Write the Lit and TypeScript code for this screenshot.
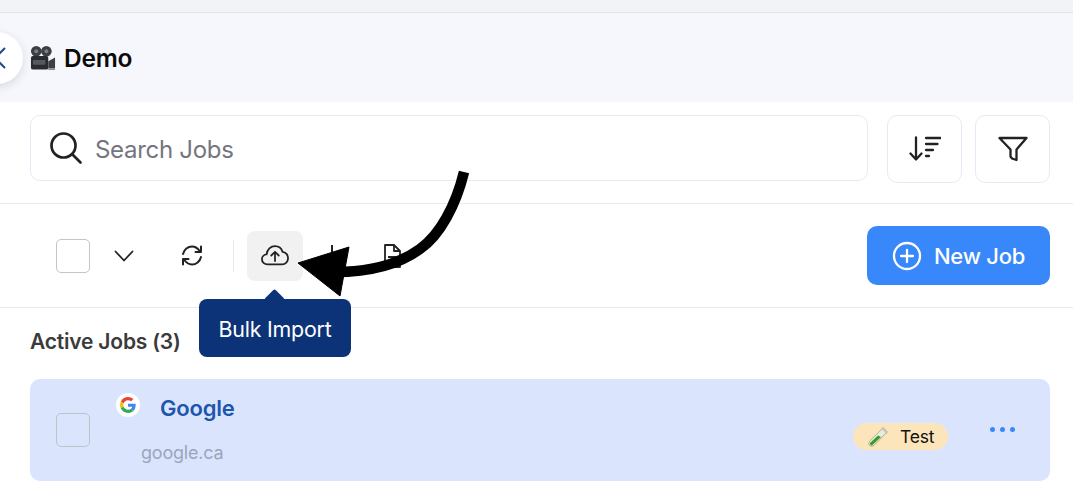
import { LitElement, html, css } from "lit";
import { customElement } from "lit/decorators.js";

@customElement("app-root")
export class AppRoot extends LitElement {
  static styles = css`
    :host { display: block; width: 1073px; height: 492px; overflow: hidden; position: relative; background: #fff; font-family: Inter, "Noto Sans", sans-serif; color: #222; }
    * { box-sizing: border-box; }
    svg { display: block; }
    .topband { height: 13px; background: #f2f3f7; border-bottom: 1px solid #e3e4ea; }
    .header { height: 89px; background: #f6f7fc; display: flex; align-items: center; padding-left: 30px; gap: 8px; position: relative; }
    .back { position: absolute; left: -29px; top: 19px; width: 52px; height: 52px; border-radius: 50%; background: #fff; box-shadow: 0 3px 10px rgba(30,40,80,.14); display: flex; align-items: center; justify-content: flex-end; padding-right: 17px; }
    .title { font-size: 24.5px; font-weight: 600; color: #0a0a0a; letter-spacing: -.25px; }
    .search-row { height: 102px; border-bottom: 1px solid #e9e9f3; padding: 13px 23px 0 30px; display: flex; gap: 13px; align-items: flex-start; }
    .search { flex: 1; height: 66px; border: 1px solid #e8e9f3; border-radius: 10px; display: flex; align-items: center; padding-left: 18px; gap: 12px; font-size: 24px; letter-spacing: -.3px; color: #75757f; margin-right: 6px; }
    .search span { padding-top: 2px; }
    .sq { width: 75px; height: 68px; border: 1px solid #e8e9f3; border-radius: 10px; display: flex; align-items: center; justify-content: center; }
    .toolbar { height: 104px; border-bottom: 1px solid #e9e9f3; display: flex; align-items: center; padding: 0 23px 0 56px; position: relative; }
    .check { width: 34px; height: 34px; border: 1px solid #c5c5c5; border-radius: 5px; flex: none; }
    .chev { margin-left: 24px; }
    .refresh { margin-left: 47px; }
    .sep { width: 1px; height: 32px; background: #e8e8ee; margin-left: 30px; }
    .upload { width: 56px; height: 50px; background: #f1f1f1; border-radius: 8px; margin-left: 13px; display: flex; align-items: center; justify-content: center; }
    .plus { margin-left: 20px; }
    .doc { margin-left: 42px; }
    .new { margin-left: auto; width: 183px; height: 59px; background: #3888fb; border-radius: 10px; color: #fff; display: flex; align-items: center; justify-content: center; gap: 12px; font-size: 22px; font-weight: 500; letter-spacing: -.25px; }
    .tip { position: absolute; left: 199px; top: 95px; width: 152px; height: 58px; background: #0c3278; color: #fff; border-radius: 8px; font-size: 21.4px; display: flex; align-items: center; justify-content: center; letter-spacing: -.2px; padding-top: 1px; }
    .tip::before { content: ""; position: absolute; left: 68px; top: -7px; width: 15px; height: 15px; background: #0c3278; transform: rotate(45deg); border-radius: 2px; }
    .section { padding: 21px 23px 0 30px; }
    .heading { font-size: 21px; font-weight: 600; color: #3b3b3b; letter-spacing: -.2px; line-height: 26px; height: 50px; }
    .job { height: 102px; background: #dae5fd; border-radius: 10px; position: relative; display: flex; align-items: center; padding: 0 35px 0 26px; }
    .job .check { border-color: #c0c2ca; }
    .info { margin-left: 26px; align-self: flex-start; width: 200px; position: relative; height: 100%; }
    .logo { position: absolute; left: 0; top: 14px; width: 24px; height: 24px; background: #fff; border-radius: 50%; display: flex; align-items: center; justify-content: center; }
    .name { position: absolute; left: 44px; top: 15px; font-size: 22px; font-weight: 600; color: #1d56ae; letter-spacing: -.2px; line-height: 28px; }
    .domain { position: absolute; left: 25px; top: 62px; font-size: 18px; color: #9aa5bb; letter-spacing: -.2px; line-height: 24px; }
    .badge { margin-left: auto; width: 95px; height: 27px; border-radius: 14px; background: #fde5bb; display: flex; align-items: center; gap: 11px; padding-left: 14px; font-size: 17.5px; color: #111; margin-top: 13px; letter-spacing: -.2px; }
    .dots { margin-left: 42px; display: flex; gap: 5px; margin-bottom: 2px; }
    .dots i { width: 5px; height: 5px; border-radius: 50%; background: #3888fb; }
    .arrow { position: absolute; left: 0; top: 0; pointer-events: none; }
  `;

  render() {
    return html`
      <div class="topband"></div>
      <div class="header">
        <div class="back"><svg width="12" height="22" viewBox="0 0 12 22" fill="none" stroke="#1d4a8f" stroke-width="2"><path d="M11 1 1 11l10 10"/></svg></div>
        <svg width="26" height="26" viewBox="0 0 27 26">
          <circle cx="6.500" cy="6" r="5.500" fill="#3c3f44"/><circle cx="6.500" cy="6" r="2" fill="#7d8187"/>
          <circle cx="17" cy="6" r="5.500" fill="#3c3f44"/><circle cx="17" cy="6" r="2" fill="#7d8187"/>
          <rect x="1" y="11" width="18" height="14" rx="2" fill="#2a2c30"/>
          <rect x="3" y="15" width="13" height="5" rx="1" fill="#565a60"/>
          <path d="M19 16.500 26 12.500V24h-7z" fill="#3c3f44"/><path d="M19 24h7v1.500h-7z" fill="#8c8f94"/>
        </svg>
        <div class="title">Demo</div>
      </div>
      <div class="search-row">
        <div class="search">
          <svg width="34" height="34" viewBox="0 0 34 34" fill="none" stroke="#222" stroke-width="2.700" stroke-linecap="round"><circle cx="14.500" cy="14.500" r="12"/><path d="m23.500 23.500 8 8"/></svg>
          <span>Search Jobs</span>
        </div>
        <div class="sq">
          <svg width="32" height="26" viewBox="0 0 32 26" fill="none" stroke="#222" stroke-width="2.300" stroke-linecap="round" stroke-linejoin="round"><path d="M7 1.500V23M1.500 17.500 7 23.500l5.500-6"/><path d="M17 2h14.500M17 8h11.500M17 14h7M17 20h3"/></svg>
        </div>
        <div class="sq">
          <svg width="30" height="26" viewBox="0 0 30 26" fill="none" stroke="#222" stroke-width="2.300" stroke-linejoin="round" stroke-linecap="round"><path d="M1.500 2h27L18.500 13.500V24l-4.500-1.500-1.500-2V13.500z"/></svg>
        </div>
      </div>
      <div class="toolbar">
        <div class="check"></div>
        <svg class="chev" width="20" height="12" viewBox="0 0 20 12" fill="none" stroke="#222" stroke-width="1.800" stroke-linecap="round" stroke-linejoin="round"><path d="m1.500 1.500 8.500 9 8.500-9"/></svg>
        <svg class="refresh" width="22" height="21" viewBox="0 0 22 21" fill="none" stroke="#222" stroke-width="2" stroke-linecap="round" stroke-linejoin="round"><path d="M2 9C3 4.500 7 1.500 11 1.500c3.500 0 6 2 8 5M20 1.500v5.500h-5.500"/><path d="M20 12c-1 4.500-5 7.500-9 7.500-3.500 0-6-2-8-5M2 19.500V14h5.500"/></svg>
        <div class="sep"></div>
        <div class="upload">
          <svg width="28" height="21" viewBox="0 0 30 22" fill="none" stroke="#222" stroke-width="1.900" stroke-linecap="round" stroke-linejoin="round"><path d="M8 20.500H7C3.500 20.500 1 18 1 15c0-3 2.500-5 5-5.200C6.500 4.500 10.500 1 15 1c4 0 7 2.500 8 6 3.500.3 6 3.500 6 7 0 3.500-2.700 6.500-6.500 6.500z"/><path d="M15 17V7.500M11 11l4-4 4 4"/></svg>
        </div>
        <svg class="plus" width="18" height="24" viewBox="0 0 18 24" fill="none" stroke="#222" stroke-width="2"><path d="M9 1v22"/></svg>
        <svg class="doc" width="18" height="24" viewBox="0 0 18 24" fill="none" stroke="#222" stroke-width="1.800" stroke-linejoin="round"><path d="M2 1h9l6 6v16H2z"/><path d="M11 1v6h6M5 13h8"/></svg>
        <div class="new">
          <svg width="30" height="30" viewBox="0 0 30 30" fill="none" stroke="#fff" stroke-width="2.300" stroke-linecap="round"><circle cx="15" cy="15" r="13"/><path d="M15 9v12M9 15h12"/></svg>
          <span>New Job</span>
        </div>
        <div class="tip">Bulk Import</div>
      </div>
      <div class="section">
        <div class="heading">Active Jobs (3)</div>
        <div class="job">
          <div class="check"></div>
          <div class="info">
            <div class="logo">
              <svg width="16" height="16" viewBox="0 0 48 48"><path fill="#EA4335" d="M24 9.500c3.500 0 6.700 1.200 9.200 3.600l6.900-6.900C35.900 2.400 30.500 0 24 0 14.600 0 6.500 5.400 2.600 13.200l8 6.200C12.400 13.700 17.700 9.500 24 9.500z"/><path fill="#4285F4" d="M47 24.500c0-1.600-.1-3.100-.4-4.500H24v9h12.900c-.6 3-2.200 5.500-4.800 7.200l7.700 6C44.300 38 47 31.800 47 24.500z"/><path fill="#FBBC05" d="M10.500 28.600c-.5-1.400-.8-3-.8-4.600s.3-3.200.8-4.600l-8-6.200C.9 16.500 0 20.100 0 24s.9 7.500 2.600 10.800z"/><path fill="#34A853" d="M24 48c6.500 0 11.900-2.100 15.900-5.800l-7.700-6c-2.200 1.500-5 2.300-8.200 2.300-6.300 0-11.600-4.200-13.500-9.900l-8 6.200C6.500 42.600 14.600 48 24 48z"/></svg>
            </div>
            <div class="name">Google</div>
            <div class="domain">google.ca</div>
          </div>
          <div class="badge">
            <svg width="22" height="22" viewBox="0 0 22 22"><path d="M16 2 20 6 7 19.500c-1.500 1.200-3.500 1-4.500 0s-1-3 .2-4.500z" fill="#e8ecd8" stroke="#9aa38c" stroke-width=".8"/><path d="M11 9.500 3 17c-.5 1.500.5 2.500 2 2.500L14 11z" fill="#3f9a2e"/><path d="m15 1.500 5.500 5.500" stroke="#c9c8b5" stroke-width="2.500"/></svg>
            <span>Test</span>
          </div>
          <div class="dots"><i></i><i></i><i></i></div>
        </div>
      </div>
      <svg class="arrow" width="1073" height="492" viewBox="0 0 1073 492">
        <path d="M464 172C456 205 440 235 420 249C398 265 370 272 335 272" fill="none" stroke="#000" stroke-width="10.500"/>
        <path d="M298 263 349 247 340 296Z" fill="#000" stroke="#000" stroke-width="1"/>
      </svg>
    `;
  }
}
